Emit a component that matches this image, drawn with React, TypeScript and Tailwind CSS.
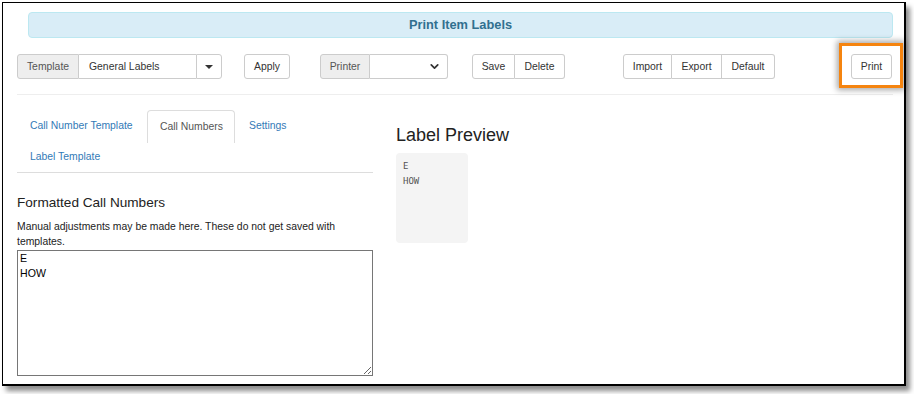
import { ChevronDown } from 'lucide-react';

const btn =
  'h-[25px] px-[8px] shrink-0 flex items-center bg-white border border-[#ccc] text-[10.4px] text-[#333]';

function Toolbar() {
  return (
    <div className="flex items-center mt-[16px] h-[25px]">
      <div className="flex shrink-0 h-[25px]">
        <span className="w-[62px] flex items-center justify-center bg-[#eee] border border-[#ccc] rounded-l-[3px] text-[10.4px] text-[#555]">
          Template
        </span>
        <span className="w-[117px] flex items-center pl-[10px] border-y border-[#ccc] text-[10.4px] text-[#333]">
          General Labels
        </span>
        <span className="w-[26px] flex items-center justify-center border border-[#ccc] rounded-r-[3px]">
          <span className="w-0 h-0 border-x-[4px] border-x-transparent border-t-[4px] border-t-[#333]" />
        </span>
      </div>
      <button className={`${btn} ml-[22px] w-[46px] justify-center rounded-[3px]`}>Apply</button>

      <div className="flex shrink-0 h-[25px] ml-[30px]">
        <span className="w-[50px] flex items-center justify-center bg-[#eee] border border-[#ccc] rounded-l-[3px] text-[10.4px] text-[#555]">
          Printer
        </span>
        <span className="w-[78px] flex items-center justify-end pr-[6px] border border-l-0 border-[#ccc] rounded-r-[3px]">
          <ChevronDown size={13} strokeWidth={3.2} className="text-[#333]" />
        </span>
      </div>

      <div className="flex shrink-0 ml-[24px]">
        <button className={`${btn} w-[43px] justify-center rounded-l-[3px]`}>Save</button>
        <button className={`${btn} w-[50px] justify-center border-l-0 rounded-r-[3px]`}>Delete</button>
      </div>

      <div className="flex shrink-0 ml-[58px]">
        <button className={`${btn} w-[49px] justify-center rounded-l-[3px]`}>Import</button>
        <button className={`${btn} w-[50px] justify-center border-l-0`}>Export</button>
        <button className={`${btn} w-[53px] justify-center border-l-0 rounded-r-[3px]`}>Default</button>
      </div>

      <div className="relative shrink-0 ml-[76px]">
        <div className="absolute left-[-12px] top-[-11px] w-[64px] h-[45px] border-[3px] border-[#f5840f] shadow-[0_0_6px_2px_rgba(0,0,0,0.35)]" />
        <button className={`${btn} relative w-[41px] justify-center rounded-[3px]`}>Print</button>
      </div>
    </div>
  );
}

function Tabs() {
  return (
    <div className="border-b border-[#ddd]">
      <div className="flex h-[32px]">
        <span className="w-[130px] pl-[13px] flex items-center text-[10.4px] text-[#337ab7]">Call Number Template</span>
        <span className="w-[88px] pl-[12px] flex items-center text-[10.4px] text-[#555] bg-white border border-[#ddd] border-b-0 rounded-t-[4px] mb-[-1px] relative z-10 h-[33px]">
          Call Numbers
        </span>
        <span className="pl-[14px] flex items-center text-[10.4px] text-[#337ab7]">Settings</span>
      </div>
      <div className="flex h-[30px]">
        <span className="pl-[13px] flex items-center text-[10.4px] text-[#337ab7]">Label Template</span>
      </div>
    </div>
  );
}

export default function App() {
  return (
    <div className="w-[914px] h-[394px] bg-white font-['Liberation_Sans',Arial,sans-serif] overflow-hidden">
      <div className="ml-[2px] mt-[2px] w-[904px] h-[384px] border-l border-t border-r-2 border-b-2 border-black bg-white shadow-[4px_5px_5px_rgba(0,0,0,0.45)] pl-[14px] pr-[11px]">
        <div className="ml-[11px] mt-[9px] h-[26px] flex items-center justify-center bg-[#d9edf7] border border-[#bce8f1] rounded-[4px] text-[12.8px] font-bold text-[#31708f]">
          Print Item Labels
        </div>

        <Toolbar />

        <div className="mt-[15px] border-t border-[#eee]" />

        <div className="flex mt-[15px]">
          <div className="w-[356px]">
            <Tabs />
            <div className="mt-[21px] text-[13.6px] leading-[18px] text-[#222]">Formatted Call Numbers</div>
            <p className="mt-[7px] text-[10.4px] leading-[15px] text-[#222]">
              Manual adjustments may be made here. These do not get saved with templates.
            </p>
            <textarea
              className="block mt-[1px] w-[356px] h-[126px] border border-[#767676] px-[2px] pt-0 text-[10.6px] leading-[15px] text-black resize-y outline-none"
              defaultValue={'E\nHOW'}
            />
          </div>

          <div className="ml-[23px]">
            <h2 className="mt-[15px] text-[18px] leading-[20px] text-[#222]">Label Preview</h2>
            <div className="mt-[8px] w-[72px] h-[90px] bg-[#f4f4f4] rounded-[4px] px-[7px] pt-[6px] font-['DejaVu_Sans_Mono',monospace] text-[9px] leading-[15px] text-[#555]">
              <div>E</div>
              <div>HOW</div>
            </div>
          </div>
        </div>
      </div>
    </div>
  );
}
